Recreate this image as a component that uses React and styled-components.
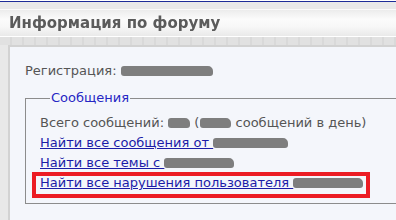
import React from "react"
import styled, { createGlobalStyle } from 'styled-components'

const GlobalStyle = createGlobalStyle`
  html, body {
    margin: 0;
    padding: 0;
    background: #e8e8e8;
    overflow: hidden;
  }
  body {
    font-family: "DejaVu Sans", Verdana, sans-serif;
  }
`

const StyledPage = styled.div`
  width: 520px;
  height: 220px;
  padding-top: 1px;
  background: #fff;
`

const StyledHeader = styled.div`
  border-top: 1px solid #1e2c98;
  background: #e9e9e9;
  padding-top: 7px;
`

const StyledTitleBar = styled.div`
  height: 26px;
  border-top: 1px solid #fafafa;
  border-bottom: 1px solid #fff;
  background: linear-gradient(#ececec 0%, #fbfbfb 35%, #f7f7f7 65%, #e9e9e9 100%);
  display: flex;
  align-items: center;
  padding-left: 9px;
`

const StyledTitle = styled.h1`
  margin: 0;
  font-size: 15px;
  font-weight: bold;
  color: #5b5b5b;
  transform: scaleY(1.05);
`

const StyledBand = styled.div`
  height: 8px;
  background: repeating-linear-gradient(90deg, #e1e1e1 0 10px, #d9d9d9 10px 12px);
`

const StyledBody = styled.div`
  background: #e8e8e8;
  padding-left: 8px;
  height: 180px;
`

const StyledPanel = styled.div`
  border-left: 2px solid #d2d2d2;
  border-top: 2px solid #d2d2d2;
  background: #f4f6fb;
  height: 100%;
  padding: 14px 0 0 15px;
  color: #555;
  font-size: 13px;
`

const StyledLine = styled.div`
  line-height: 20px;
  white-space: nowrap;
`

const StyledFieldset = styled.fieldset`
  margin: 10px 0 0 0;
  padding: 8px 0 5px 14px;
  border: 1px solid #8c8c8c;
  border-right: none;
  min-width: 0;
`

const StyledLegend = styled.legend`
  color: #2626c4;
  line-height: 14px;
  padding: 0 1px;
  margin-left: 10px;
`

const StyledLink = styled.a`
  color: #1c1ca8;
  text-decoration: underline;
  cursor: pointer;
`

const StyledHighlight = styled.div`
  width: 326px;
  margin: -1px 0 0 -8px;
  padding: 0 0 4px 4px;
  border: 4px solid #ec1c24;
  line-height: 14px;
  white-space: nowrap;
`

const StyledBlot = styled.span`
  display: inline-block;
  width: ${p => p.w}px;
  height: 10px;
  margin-left: ${p => p.gap || 0}px;
  background: #7e7e7e;
  border-radius: 3px 5px 3px 3px;
  filter: blur(0.7px);
  vertical-align: -1px;
`

const App = () => (
  <StyledPage>
    <GlobalStyle />
    <StyledHeader>
      <StyledTitleBar>
        <StyledTitle>Информация по форуму</StyledTitle>
      </StyledTitleBar>
      <StyledBand />
    </StyledHeader>
    <StyledBody>
      <StyledPanel>
        <StyledLine>
          Регистрация: <StyledBlot w={92} />
        </StyledLine>
        <StyledFieldset>
          <StyledLegend>Сообщения</StyledLegend>
          <StyledLine>
            Всего сообщений: <StyledBlot w={22} /> (<StyledBlot w={31} gap={1} /> сообщений в день)
          </StyledLine>
          <StyledLine>
            <StyledLink>Найти все сообщения от <StyledBlot w={75} /></StyledLink>
          </StyledLine>
          <StyledLine>
            <StyledLink>Найти все темы с <StyledBlot w={70} /></StyledLink>
          </StyledLine>
          <StyledHighlight>
            <StyledLink>Найти все нарушения пользователя <StyledBlot w={70} /></StyledLink>
          </StyledHighlight>
        </StyledFieldset>
      </StyledPanel>
    </StyledBody>
  </StyledPage>
)

export default App
